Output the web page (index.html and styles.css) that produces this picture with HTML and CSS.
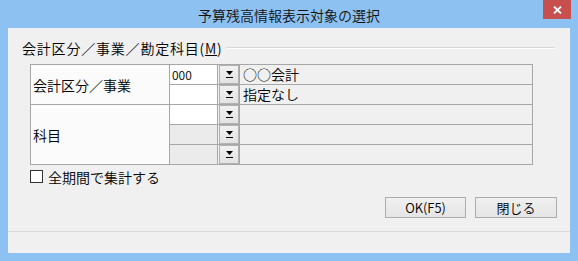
FILE: index.html
```html
<!DOCTYPE html>
<html lang="ja">

<head>
    <meta charset="UTF-8" />
    <title>予算残高情報表示対象の選択</title>
    <link rel="stylesheet" href="styles.css">
</head>

<body>
    <div class="window">
        <div class="titlebar">
            <span class="title">予算残高情報表示対象の選択</span>
            <div class="close">
                <svg width="9" height="8" viewBox="0 0 9 8">
                    <path d="M1 0.5 L8 7.5 M8 0.5 L1 7.5" stroke="#fff" stroke-width="1.8" />
                </svg>
            </div>
        </div>

        <div class="client">
            <div class="group-head">
                <span class="caption">会計区分／事業／勘定科目(<u>M</u>)</span>
                <span class="rule"></span>
            </div>

            <div class="grid">
                <div class="label span2">会計区分／事業</div>
                <div class="code">000</div>
                <div class="drop"><span class="btn"><svg width="7" height="7" viewBox="0 0 7 7"><path d="M0 0 H7 L3.5 4 Z" fill="#000"/><rect x="0" y="6" width="7" height="1" fill="#000"/></svg></span></div>
                <div class="name">○○会計</div>

                <div class="code"></div>
                <div class="drop"><span class="btn"><svg width="7" height="7" viewBox="0 0 7 7"><path d="M0 0 H7 L3.5 4 Z" fill="#000"/><rect x="0" y="6" width="7" height="1" fill="#000"/></svg></span></div>
                <div class="name">指定なし</div>

                <div class="label span3">科目</div>
                <div class="code"></div>
                <div class="drop"><span class="btn"><svg width="7" height="7" viewBox="0 0 7 7"><path d="M0 0 H7 L3.5 4 Z" fill="#000"/><rect x="0" y="6" width="7" height="1" fill="#000"/></svg></span></div>
                <div class="name"></div>

                <div class="code off"></div>
                <div class="drop"><span class="btn"><svg width="7" height="7" viewBox="0 0 7 7"><path d="M0 0 H7 L3.5 4 Z" fill="#000"/><rect x="0" y="6" width="7" height="1" fill="#000"/></svg></span></div>
                <div class="name"></div>

                <div class="code off"></div>
                <div class="drop"><span class="btn"><svg width="7" height="7" viewBox="0 0 7 7"><path d="M0 0 H7 L3.5 4 Z" fill="#000"/><rect x="0" y="6" width="7" height="1" fill="#000"/></svg></span></div>
                <div class="name"></div>
            </div>

            <div class="check">
                <span class="box"></span>
                <span>全期間で集計する</span>
            </div>

            <div class="actions">
                <button class="ok">OK(F5)</button>
                <button class="cancel">閉じる</button>
            </div>

            <div class="footer"></div>
        </div>
    </div>
</body>

</html>
```
FILE: styles.css
```css
body {
    margin: 0;
    font-family: "Noto Sans CJK JP", "Liberation Sans", sans-serif;
    font-size: 14px;
    font-weight: 350;
    color: #000;
}

.window {
    width: 578px;
    height: 261px;
    background-color: #8cc1f2;
}

.titlebar {
    position: relative;
    height: 28px;
    display: flex;
    align-items: center;
    justify-content: center;
}

.title {
    font-size: 14px;
    line-height: 16px;
    color: #111;
    margin-top: 2px;
}

/* 閉じるボタン */
.close {
    position: absolute;
    top: 0;
    left: 543px;
    width: 28px;
    height: 19px;
    background-color: #c7504e;
    display: flex;
    align-items: center;
    justify-content: center;
}

.close svg {
    display: block;
}

.client {
    margin: 0 8px;
    height: 225px;
    background-color: #f0f0f0;
    display: flex;
    flex-direction: column;
}

.group-head {
    margin: 10px 15px 0 14px;
    height: 20px;
    display: flex;
    align-items: center;
    gap: 4px;
    line-height: 16px;
}

.caption {
    letter-spacing: 0.8px;
}

.group-head u {
    text-decoration-thickness: 1px;
}

.group-head .rule {
    flex: 1;
    height: 1px;
    background-color: #d7d7d7;
    border-bottom: 1px solid #fff;
}

/* 表 */
.grid {
    margin: 6px 0 0 22px;
    width: 503px;
    display: grid;
    grid-template-columns: 138px 47px 21px 292px;
    grid-template-rows: repeat(5, 19px);
    gap: 1px;
    padding: 1px;
    box-sizing: border-box;
    background-color: #a7a7a7;
}

.label {
    background-color: #fbfbfb;
    padding-left: 2px;
    display: flex;
    align-items: center;
    line-height: 16px;
}

.span2 {
    grid-row: span 2;
}

.span3 {
    grid-row: span 3;
}

.code {
    background-color: #fff;
    font-size: 12px;
    line-height: 19px;
    padding-left: 2px;
}

.code.off {
    background-color: #ebebeb;
}

.drop {
    background-color: #f0f0f0;
    padding-left: 1px;
    display: flex;
}

.btn {
    flex: 1;
    border: 1px solid #b2b2b2;
    background: linear-gradient(#f2f2f2, #e3e3e3);
    display: flex;
    align-items: center;
    justify-content: center;
}

.btn svg {
    display: block;
}

.name {
    background-color: #f0f0f0;
    padding-left: 3px;
    line-height: 19px;
}

.check {
    margin: 5px 0 0 22px;
    height: 13px;
    display: flex;
    align-items: center;
    gap: 5px;
    line-height: 16px;
}

.box {
    width: 11px;
    height: 11px;
    border: 1px solid #333;
    background-color: #fff;
}

.actions {
    margin: 14px 13px 0 0;
    display: flex;
    justify-content: flex-end;
    gap: 9px;
}

.actions button {
    height: 21px;
    padding: 0;
    border: 1px solid #acacac;
    background: linear-gradient(#f0f0f0, #e5e5e5);
    font-family: "Noto Sans CJK JP", "Liberation Sans", sans-serif;
    font-size: 13px;
    font-weight: 350;
    line-height: 17px;
    color: #000;
}

.ok {
    width: 81px;
}

.cancel {
    width: 82px;
}

.footer {
    margin-top: 13px;
    flex: 1;
    border-top: 1px solid #d9d9d9;
}
```
